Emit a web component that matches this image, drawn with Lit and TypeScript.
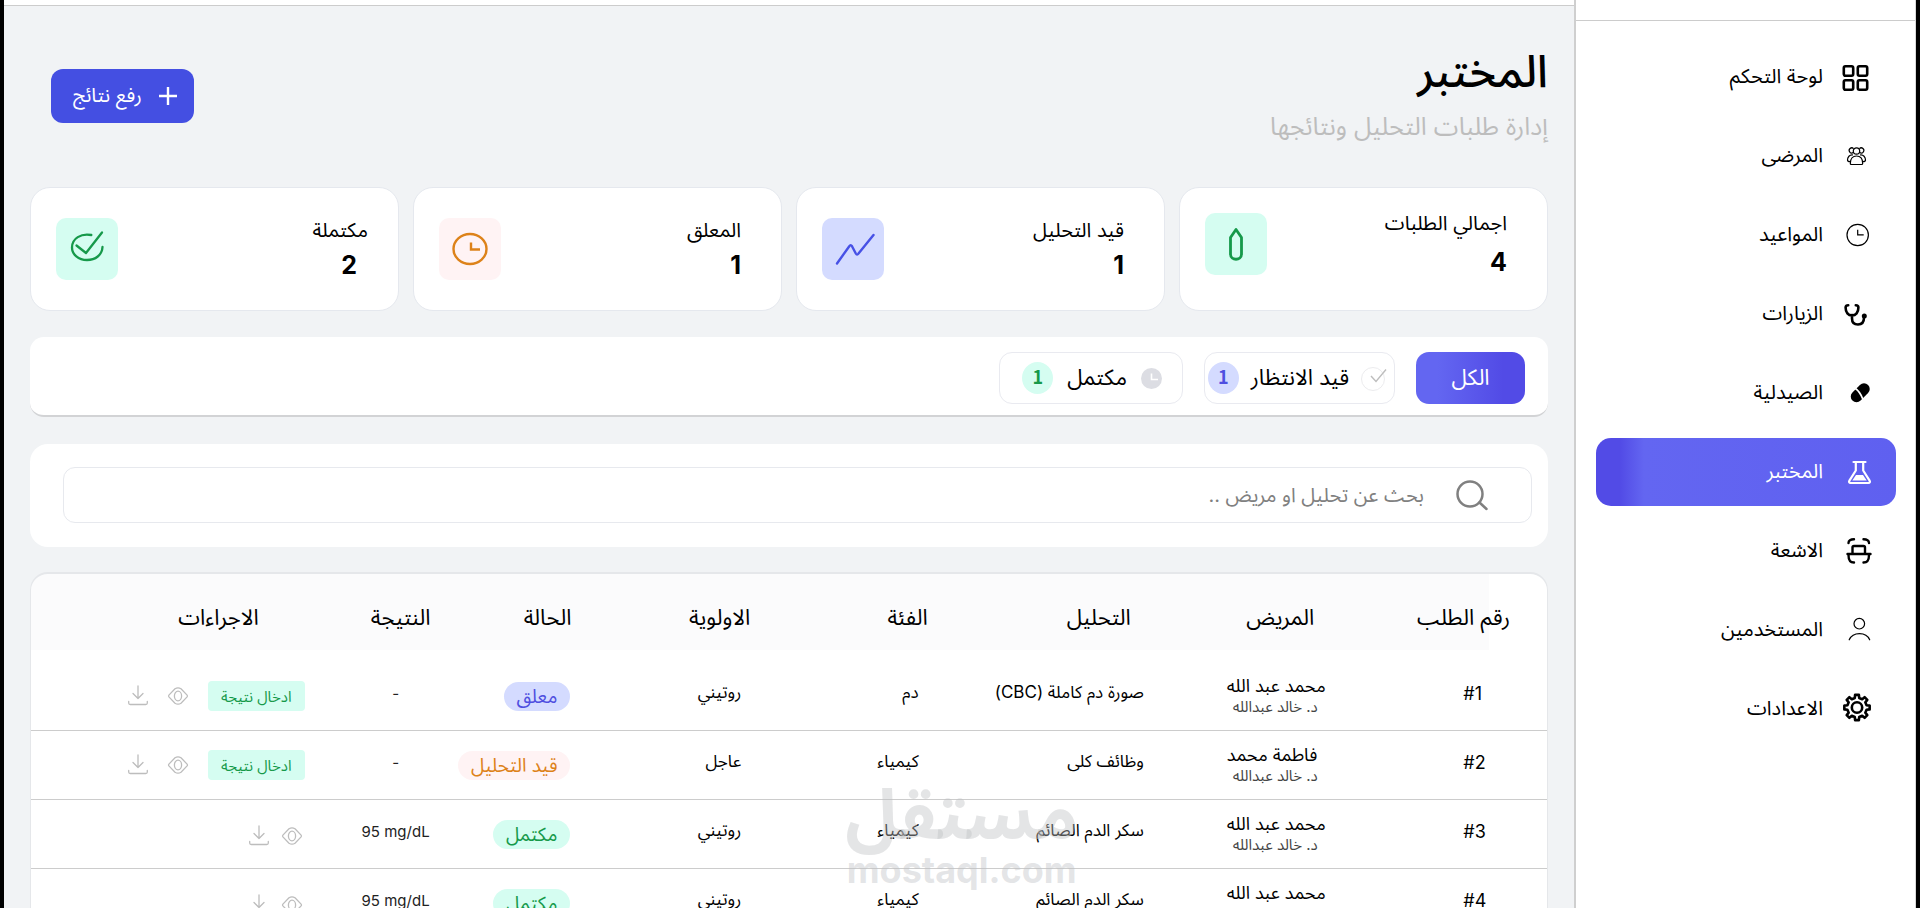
import { LitElement, html, css, svg, nothing } from "lit";
import { customElement, state } from "lit/decorators.js";
import { classMap } from "lit/directives/class-map.js";

const gearPath = (cx: number, cy: number, outer: number, inner: number, teeth: number) => {
  const step = (Math.PI * 2) / teeth;
  const points: string[] = [];
  for (let i = 0; i < teeth; i++) {
    const a = i * step - Math.PI / 2;
    for (const [offset, r] of [[-0.29, inner], [-0.19, outer], [0.19, outer], [0.29, inner]]) {
      const t = a + offset * step;
      points.push(`${(cx + r * Math.cos(t)).toFixed(2)} ${(cy + r * Math.sin(t)).toFixed(2)}`);
    }
  }
  return `M${points.join("L")}Z`;
};

const navIcons: Record<string, unknown> = {
  grid: svg`<g fill="none" stroke="currentColor" stroke-width="2.6"><rect x="0.8" y="3.3" width="9.4" height="9.4" rx="1.6"/><rect x="14.8" y="3.3" width="9.4" height="9.4" rx="1.6"/><rect x="0.8" y="17.3" width="9.4" height="9.4" rx="1.6"/><rect x="14.8" y="17.3" width="9.4" height="9.4" rx="1.6"/></g>`,
  patients: svg`<g fill="none" stroke="currentColor" stroke-width="1.2" stroke-linejoin="round"><circle cx="13.5" cy="9" r="3.2"/><path d="M10.6 6.6a2.6 2.6 0 1 0-.3 4M16.4 6.6a2.6 2.6 0 1 1 .3 4"/><path d="M7.3 21.5c0-5 2.6-7.5 6.2-7.5s6.2 2.5 6.2 7.5c0 .8-.5 1-1.2 1h-10c-.7 0-1.2-.2-1.2-1Z"/><path d="M10 13c-3.5-.6-5.5 2.2-5.5 5 0 1.3 1 1.7 2.6 1.7M17 13c3.5-.6 5.5 2.2 5.5 5 0 1.3-1 1.7-2.6 1.7"/></g>`,
  clock: svg`<g fill="none" stroke="currentColor" stroke-width="1.2"><circle cx="14.7" cy="14" r="10.7"/><path d="M14.7 8.8v5h6"/></g>`,
  stethoscope: svg`<g fill="none" stroke="currentColor" stroke-width="2.6" stroke-linecap="round"><path d="M5.2 5.2C3.6 5.2 2.6 6 2.6 7.5c0 5 2.6 7.9 6.4 7.9s6.4-2.9 6.4-7.9c0-1.5-1-2.3-2.6-2.3M9 15v3.5c0 4 2.2 6 6 6s6-2.2 6-7"/></g><circle cx="21.3" cy="16" r="2.5" fill="currentColor"/>`,
  pill: svg`<path d="M13.5 17.5 21 10" stroke="currentColor" stroke-width="11.5" stroke-linecap="round"/><path d="M11.5 8.8Q17 12.5 20 20.5" fill="none" stroke="#fff" stroke-width="1.7"/>`,
  flask: svg`<g fill="none" stroke="currentColor" stroke-width="2.2" stroke-linecap="round" stroke-linejoin="round"><path d="M10.5 4h12M12.8 4v8.5L6.4 22.6c-.8 1.3-.2 2.4 1.2 2.4h17.8c1.4 0 2-1.1 1.2-2.4L20.2 12.5V4"/></g><path d="M13 17h7l3.7 5.5H9.3Z" fill="currentColor"/>`,
  scan: svg`<g fill="none" stroke="currentColor" stroke-width="2.4" stroke-linecap="round" stroke-linejoin="round"><path d="M5.5 6C5.5 3.5 7.5 2.3 11 2.3M26 6c0-2.5-2-3.7-5.5-3.7M4.5 17h23M9.5 16.5v-6c0-1 .5-1.5 1.5-1.5h9.500c1 0 1.500.5 1.500 1.500v6M5.500 18c0 5.500 1.500 7.500 5.500 7.500M26 18c0 5.500-1.500 7.500-5.500 7.500"/></g>`,
  user: svg`<g fill="none" stroke="currentColor" stroke-width="1.2" stroke-linecap="round"><circle cx="16.3" cy="7.7" r="5.3"/><path d="M6.2 23.8C8 19.8 12 17.6 16.5 17.6s8.500 2.200 10.200 6.200"/></g>`,
  gear: svg`<g fill="none" stroke="currentColor" stroke-width="2.6" stroke-linejoin="round"><path d="${gearPath(14, 12.5, 12.8, 9.8, 8)}"/><circle cx="14" cy="12.5" r="5.2"/></g>`,
};

const statIcons: Record<string, unknown> = {
  pencil: svg`<path d="M25.5 24.5 31 16.5l5.5 8v16.5c0 7-11 7-11 0Z" fill="none" stroke="#16994a" stroke-width="2.8" stroke-linejoin="round"/>`,
  trend: svg`<path d="M15 45.5 27.3 28.2Q28.7 26 30 28.2L33.8 35.5Q35 37.6 36.5 35.6L51.5 17" fill="none" stroke="#4751e6" stroke-width="2.4" stroke-linecap="round" stroke-linejoin="round"/>`,
  clock: svg`<g fill="none" stroke="#dd8219" stroke-width="2.4"><ellipse cx="31" cy="31" rx="16.5" ry="15"/><path d="M32 24.5v7h9"/></g>`,
  check: svg`<g fill="none" stroke="#16994a" stroke-width="2.3" stroke-linecap="round" stroke-linejoin="round"><path d="M35.3 17C25 15 16 20.5 16 29.5c0 7 6.5 12.5 15 12.5s15-5 15.5-13"/><path d="M20.5 27.5 30 35 46 14.5"/></g>`,
};

const nav = [
  ["grid", "لوحة التحكم"],
  ["patients", "المرضى"],
  ["clock", "المواعيد"],
  ["stethoscope", "الزيارات"],
  ["pill", "الصيدلية"],
  ["flask", "المختبر"],
  ["scan", "الاشعة"],
  ["user", "المستخدمين"],
  ["gear", "الاعدادات"],
];

const stats = [
  { label: "اجمالي الطلبات", value: 4, icon: "pencil", tone: "mint" },
  { label: "قيد التحليل", value: 1, icon: "trend", tone: "indigo" },
  { label: "المعلق", value: 1, icon: "clock", tone: "rose" },
  { label: "مكتملة", value: 2, icon: "check", tone: "mint" },
];

const headers = ["رقم الطلب", "المريض", "التحليل", "الفئة", "الاولوية", "الحالة", "النتيجة", "الاجراءات"];

interface Order {
  id: number;
  patient: string;
  test: string;
  category: string;
  priority: string;
  status: string;
  tone: string;
  result?: string;
}

const orders: Order[] = [
  { id: 1, patient: "محمد عبد الله", test: "صورة دم كاملة (CBC)", category: "دم", priority: "روتيني", status: "معلق", tone: "indigo" },
  { id: 2, patient: "فاطمة محمد", test: "وظائف كلى", category: "كيمياء", priority: "عاجل", status: "قيد التحليل", tone: "rose" },
  { id: 3, patient: "محمد عبد الله", test: "سكر الدم الصائم", category: "كيمياء", priority: "روتيني", status: "مكتمل", tone: "mint", result: "95 mg/dL" },
  { id: 4, patient: "محمد عبد الله", test: "سكر الدم الصائم", category: "كيمياء", priority: "روتيني", status: "مكتمل", tone: "mint", result: "95 mg/dL" },
];

@customElement("app-root")
export class AppRoot extends LitElement {
  @state() private active = "flask";

  static styles = css`
    :host {
      display: block;
      height: 100vh;
      overflow: hidden;
      box-sizing: border-box;
      border-inline: 4px solid #000;
      background: #f1f3f5;
      color: #000;
      font-family: Inter, "Noto Sans Arabic", "Noto Sans", sans-serif;
      font-size: 17px;
    }
    * { box-sizing: border-box; }
    svg { display: block; overflow: visible; flex: none; }
    button { font: inherit; color: inherit; border: 0; background: none; padding: 0; cursor: pointer; }

    .shell { display: flex; height: 100%; }
    .sidebar {
      flex: none;
      width: 342px;
      background: #fff;
      border-inline-end: 2px solid #cfcfcf;
      border-inline-start: 1px solid #d9d9d9;
    }
    .brand { height: 21px; border-bottom: 1px solid #ccc; }
    .nav { display: flex; flex-direction: column; gap: 11px; padding: 22px 19px 0 20px; }
    .link {
      display: flex;
      align-items: center;
      gap: 20px;
      height: 68px;
      padding-inline-start: 25px;
      border-radius: 15px;
      color: inherit;
      text-decoration: none;
      font-size: 20px;
    }
    .link.active {
      color: #fff;
      background: linear-gradient(90deg, #524be6 8%, #6366f1 16%, #5f60f0);
    }

    .main { position: relative; flex: 1; min-width: 0; }
    .topbar { height: 6px; background: #fff; border-bottom: 1px solid #ccc; }
    .content { padding: 41px 26px 0; }
    .heading { display: flex; justify-content: space-between; align-items: flex-start; height: 140px; }
    .title { margin: 0; font-size: 45px; font-weight: 500; line-height: 48px; }
    .subtitle { margin: 11px 0 0; color: #bdbdbd; font-size: 25px; line-height: 40px; }
    .upload {
      display: flex;
      align-items: center;
      gap: 17px;
      height: 54px;
      margin: 22px 0 0 21px;
      padding: 0 17px 0 22px;
      border-radius: 12px;
      background: #444fe2;
      color: #fff;
      font-size: 20px;
    }

    .stats { display: grid; grid-template-columns: repeat(4, 1fr); gap: 14px; }
    .stat {
      display: flex;
      align-items: center;
      justify-content: space-between;
      height: 124px;
      padding: 0 40px 0 25px;
      border: 1px solid #e5e8ee;
      border-radius: 20px;
      background: #fff;
    }
    .stat:first-child { padding-bottom: 10px; }
    .stat:first-child .stat-value { padding-top: 4px; }
    .stat:last-child { padding-right: 30px; }
    .stat:last-child .stat-value { padding-right: 11px; }
    .stat-label { font-size: 20px; line-height: 32px; }
    .stat-value { font-size: 25px; font-weight: 700; line-height: 38px; }
    .tile { width: 62px; height: 62px; border-radius: 10px; }
    .mint { background: #d5fdf1; color: #16994a; }
    .indigo { background: #d4dbff; color: #4f4fe0; }
    .rose { background: #fff3f4; color: #dd8219; }

    .filters {
      display: flex;
      align-items: center;
      gap: 21px;
      height: 80px;
      margin-top: 26px;
      padding: 4px 23px 0;
      border-radius: 14px;
      border-bottom: 2px solid #d2d3d5;
      background: #fff;
      font-size: 22px;
    }
    .chip {
      display: flex;
      align-items: center;
      height: 52px;
      border: 1px solid #e9eaf0;
      border-radius: 13px;
    }
    .chip.all { justify-content: center; width: 109px; border: 0; color: #fff; background: linear-gradient(90deg, #6366f1 20%, #524be6 80%); }
    .chip.waiting { width: 191px; gap: 12px; padding-right: 8px; }
    .chip.done { width: 184px; gap: 14px; padding-right: 20px; }
    .count {
      display: grid;
      place-items: center;
      width: 31px;
      height: 32px;
      padding-bottom: 4px;
      border-radius: 50%;
      font: 500 18px/28px "Noto Sans CJK SC", sans-serif;
      font-weight: 700;
    }

    .search-card { margin-top: 27px; padding: 23px 16px 24px 33px; border-radius: 18px; background: #fff; }
    .search {
      display: flex;
      align-items: center;
      gap: 32px;
      height: 56px;
      padding: 0 43px;
      border: 1px solid #e7e9ee;
      border-radius: 12px;
    }
    .search input {
      flex: 1;
      min-width: 0;
      padding: 0;
      border: 0;
      outline: 0;
      background: none;
      font: inherit;
      font-size: 20px;
      height: 40px;
    }
    .search input::placeholder { color: #808080; opacity: 1; }

    .table-card {
      margin-top: 25px;
      border: 1px solid #e5e7ea;
      border-top-width: 2px;
      border-radius: 18px 18px 0 0;
      background: linear-gradient(#fbfbfc, #fbfbfc) left top / calc(100% - 58px) 76px no-repeat #fff;
      overflow: hidden;
    }
    table { width: 100%; border-collapse: separate; border-spacing: 0; table-layout: fixed; }
    th { height: 76px; padding: 11px 19px 0 0; text-align: right; font-size: 22px; font-weight: 400; white-space: nowrap; }
    td { height: 69px; padding: 0 20px 6px 0; text-align: right; vertical-align: middle; border-bottom: 1px solid #ccc; white-space: nowrap; }
    tbody tr:first-child td { height: 81px; padding-top: 12px; }
    .w1 { width: 14.1%; } .w2 { width: 12.1%; } .w3 { width: 13.4%; } .w4 { width: 11.7%; }
    .w5 { width: 11.8%; } .w6 { width: 9.3%; } .w7 { width: 7.9%; }
    th:first-child { padding-right: 37px; }
    th:last-child { padding-right: 71px; }
    td.order { padding-right: 0; padding-left: 130px; text-align: left; font-size: 18px; }
    td.patient { padding: 0 0 3px 77px; text-align: left; }
    .name { font-size: 18px; line-height: 24px; }
    .doctor { padding-left: 6px; color: #444; font-size: 15px; line-height: 18px; }
    td.test { padding-right: 6px; }
    td.shift { padding-right: 28px; }
    td.status, td.actions { padding-bottom: 0; }
    .pill { display: inline-block; height: 29px; padding: 0 13px; border-radius: 15px; font-size: 19px; line-height: 29px; }
    td.result { padding-left: 12px; padding-right: 0; text-align: center; font-size: 15px; color: #222; }
    td.actions { padding-right: 25px; }
    .tools { display: flex; align-items: center; gap: 20px; color: #bdbdbd; }
    .enter { width: 97px; height: 30px; border-radius: 4px; font-size: 15px; }
    .tools.compact { gap: 13px; padding: 4px 3px 0 0; }

    .watermark {
      position: absolute;
      left: 61%;
      bottom: 18px;
      transform: translateX(-50%);
      color: rgba(190, 192, 196, 0.42);
      text-align: center;
      font-weight: 700;
      pointer-events: none;
    }
    .watermark-logo { font-size: 70px; line-height: 72px; }
    .watermark-site { font-size: 36px; line-height: 40px; }
  `;

  private tool(kind: string) {
    const download = kind === "download";
    return html`<button type="button" aria-label=${download ? "تنزيل" : "عرض"}>
      <svg width="20" height="20" viewBox="0 0 20 20" fill="none" stroke="currentColor" stroke-width="1.3" stroke-linecap="round" stroke-linejoin="round">
        ${download
          ? svg`<path d="M10 0v12.5M5 7.5l5 5 5-5M.7 15.5V17c0 1 .6 1.5 1.5 1.5h15.6c.9 0 1.5-.5 1.5-1.5v-1.5"/>`
          : svg`<path d="M.9 10.9Q.2 10 .9 9.1L7 2.8Q10 .8 13 2.8L19.1 9.1Q19.8 10 19.1 10.9L13 17.2Q10 19.2 7 17.2Z"/><ellipse cx="10" cy="10" rx="3.6" ry="4.8"/>`}
      </svg>
    </button>`;
  }

  private row(o: Order) {
    return html`<tr>
      <td class="order"><bdi>#${o.id}</bdi></td>
      <td class="patient"><div class="name">${o.patient}</div><div class="doctor">د. خالد عبدالله</div></td>
      <td class="test">${o.test}</td>
      <td class="shift">${o.category}</td>
      <td class="shift">${o.priority}</td>
      <td class="status"><span class="pill ${o.tone}">${o.status}</span></td>
      <td class="result"><bdi>${o.result ?? "-"}</bdi></td>
      <td class="actions">
        <div class=${classMap({ tools: true, compact: !!o.result })}>
          ${o.result ? nothing : html`<button type="button" class="enter mint">ادخال نتيجة</button>`}
          ${this.tool("view")}${this.tool("download")}
        </div>
      </td>
    </tr>`;
  }

  render() {
    return html`<div class="shell" dir="rtl">
      <aside class="sidebar">
        <div class="brand"></div>
        <nav class="nav">
          ${nav.map(([icon, label]) => html`<a href="#${icon}" class=${classMap({ link: true, active: this.active === icon })} @click=${() => (this.active = icon)}>
            <svg width="28" height="28" viewBox="0 0 28 28">${navIcons[icon]}</svg><span>${label}</span>
          </a>`)}
        </nav>
      </aside>
      <main class="main">
        <div class="topbar"></div>
        <div class="content">
          <header class="heading">
            <div>
              <h1 class="title">المختبر</h1>
              <p class="subtitle">إدارة طلبات التحليل ونتائجها</p>
            </div>
            <button type="button" class="upload">
              <svg width="18" height="18" viewBox="0 0 18 18"><path d="M9 0v18M0 9h18" stroke="#fff" stroke-width="2.4"/></svg>
              <span>رفع نتائج</span>
            </button>
          </header>
          <section class="stats">
            ${stats.map((s) => html`<article class="stat">
              <div><div class="stat-label">${s.label}</div><div class="stat-value">${s.value}</div></div>
              <svg class="tile ${s.tone}" width="62" height="62" viewBox="0 0 62 62">${statIcons[s.icon]}</svg>
            </article>`)}
          </section>
          <section class="filters">
            <button type="button" class="chip all">الكل</button>
            <button type="button" class="chip waiting">
              <svg width="25" height="25" viewBox="0 0 25 25" fill="none"><circle cx="12" cy="13" r="11.5" stroke="#ececee"/><path d="m10 10 5 5.5L25 3.5" stroke="#bdbdbd" stroke-width="1.4"/></svg>
              <span>قيد الانتظار</span><span class="count indigo">1</span>
            </button>
            <button type="button" class="chip done">
              <svg width="21" height="21" viewBox="0 0 21 21"><circle cx="10.5" cy="10.5" r="10.5" fill="#dcdde3"/><path d="M10.5 5.5v6H17" fill="none" stroke="#fff" stroke-width="1.6"/></svg>
              <span>مكتمل</span><span class="count mint">1</span>
            </button>
          </section>
          <section class="search-card">
            <label class="search">
              <svg width="32" height="29" viewBox="0 0 32 29" fill="none" stroke="#808080" stroke-width="2.5" stroke-linecap="round"><circle cx="14" cy="13" r="12.5"/><path d="m23.5 21.5 7 6.5"/></svg>
              <input type="text" aria-label="بحث" placeholder="بحث عن تحليل او مريض .." />
            </label>
          </section>
          <section class="table-card">
            <table>
              <colgroup>${[1, 2, 3, 4, 5, 6, 7, 8].map((n) => html`<col class="w${n}" />`)}</colgroup>
              <thead><tr>${headers.map((h) => html`<th scope="col">${h}</th>`)}</tr></thead>
              <tbody>${orders.map((o) => this.row(o))}</tbody>
            </table>
          </section>
        </div>
        <div class="watermark"><div class="watermark-logo">مستقل</div><div class="watermark-site">mostaql.com</div></div>
      </main>
    </div>`;
  }
}
